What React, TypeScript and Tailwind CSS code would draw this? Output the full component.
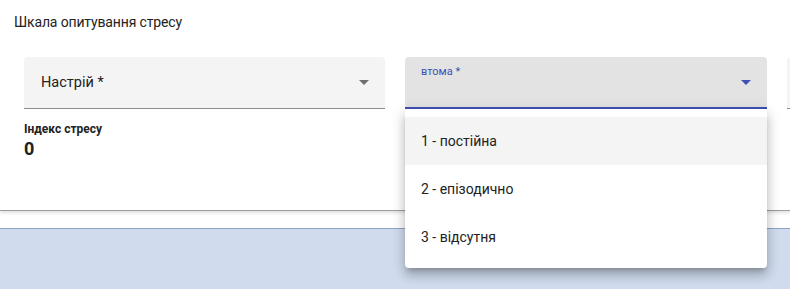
import React from "react";

function Arrow({ color }: { color: string }) {
  return (
    <svg width="10" height="5" viewBox="0 0 10 5" className="shrink-0">
      <path d="M0 0 L10 0 L5 5 Z" fill={color} />
    </svg>
  );
}

export default function App() {
  return (
    <div className="relative w-[790px] h-[289px] overflow-hidden bg-white font-['Roboto',sans-serif] flex flex-col">
      <div className="h-[211px] shrink-0 bg-white border-b border-[#9e9e9e] shadow-[0_2px_3px_rgba(0,0,0,0.12)] relative z-10">
        <div className="pl-[14px] pt-[12px] text-[14px] leading-[20px] text-[#222] tracking-[-0.15px]">
          Шкала опитування стресу
        </div>
        <div className="flex gap-5 pl-6 mt-[25px]">
          <div className="w-[361px] h-[52px] shrink-0 bg-[#f4f4f4] rounded-t-[4px] border-b border-[#8c8c8c] flex items-center justify-between pl-[17px] pr-4">
            <span className="text-[14.5px] text-[#222] pt-[1px]">Настрій *</span>
            <Arrow color="#6e6e6e" />
          </div>
          <div className="w-[362px] h-[52px] shrink-0 bg-[#e3e3e3] rounded-t-[4px] border-b-2 border-[#3f51b5] relative flex items-center justify-end pr-4">
            <span className="absolute left-[16px] top-[9px] text-[11px] leading-[12px] text-[#3f51b5]">втома *</span>
            <span className="mt-[1px]"><Arrow color="#3f51b5" /></span>
          </div>
          <div className="w-[361px] h-[52px] shrink-0 bg-[#f4f4f4] rounded-t-[4px] border-b border-[#8c8c8c]" />
        </div>
        <div className="pl-6 mt-[12px]">
          <div className="text-[12px] leading-[16px] font-bold text-[#222]">Індекс стресу</div>
          <div className="text-[18px] leading-[24px] font-bold text-[#222]">0</div>
        </div>
      </div>
      <div className="h-[17px] shrink-0 bg-white" />
      <div className="flex-1 bg-[#d0dcee] border-t border-[#8fa3c9]" />

      <div className="absolute left-[405px] top-[109px] w-[362px] h-[159px] bg-white rounded-[4px] shadow-[0_5px_5px_-3px_rgba(0,0,0,0.2),0_8px_10px_1px_rgba(0,0,0,0.14),0_3px_14px_2px_rgba(0,0,0,0.12)] z-20 pt-2">
        <div className="h-12 bg-[#f4f4f4] flex items-center pl-4 text-[14px] text-[#222]">1 - постійна</div>
        <div className="h-12 flex items-center pl-4 text-[14px] text-[#222]">2 - епізодично</div>
        <div className="h-12 flex items-center pl-4 text-[14px] text-[#222]">3 - відсутня</div>
      </div>
    </div>
  );
}
